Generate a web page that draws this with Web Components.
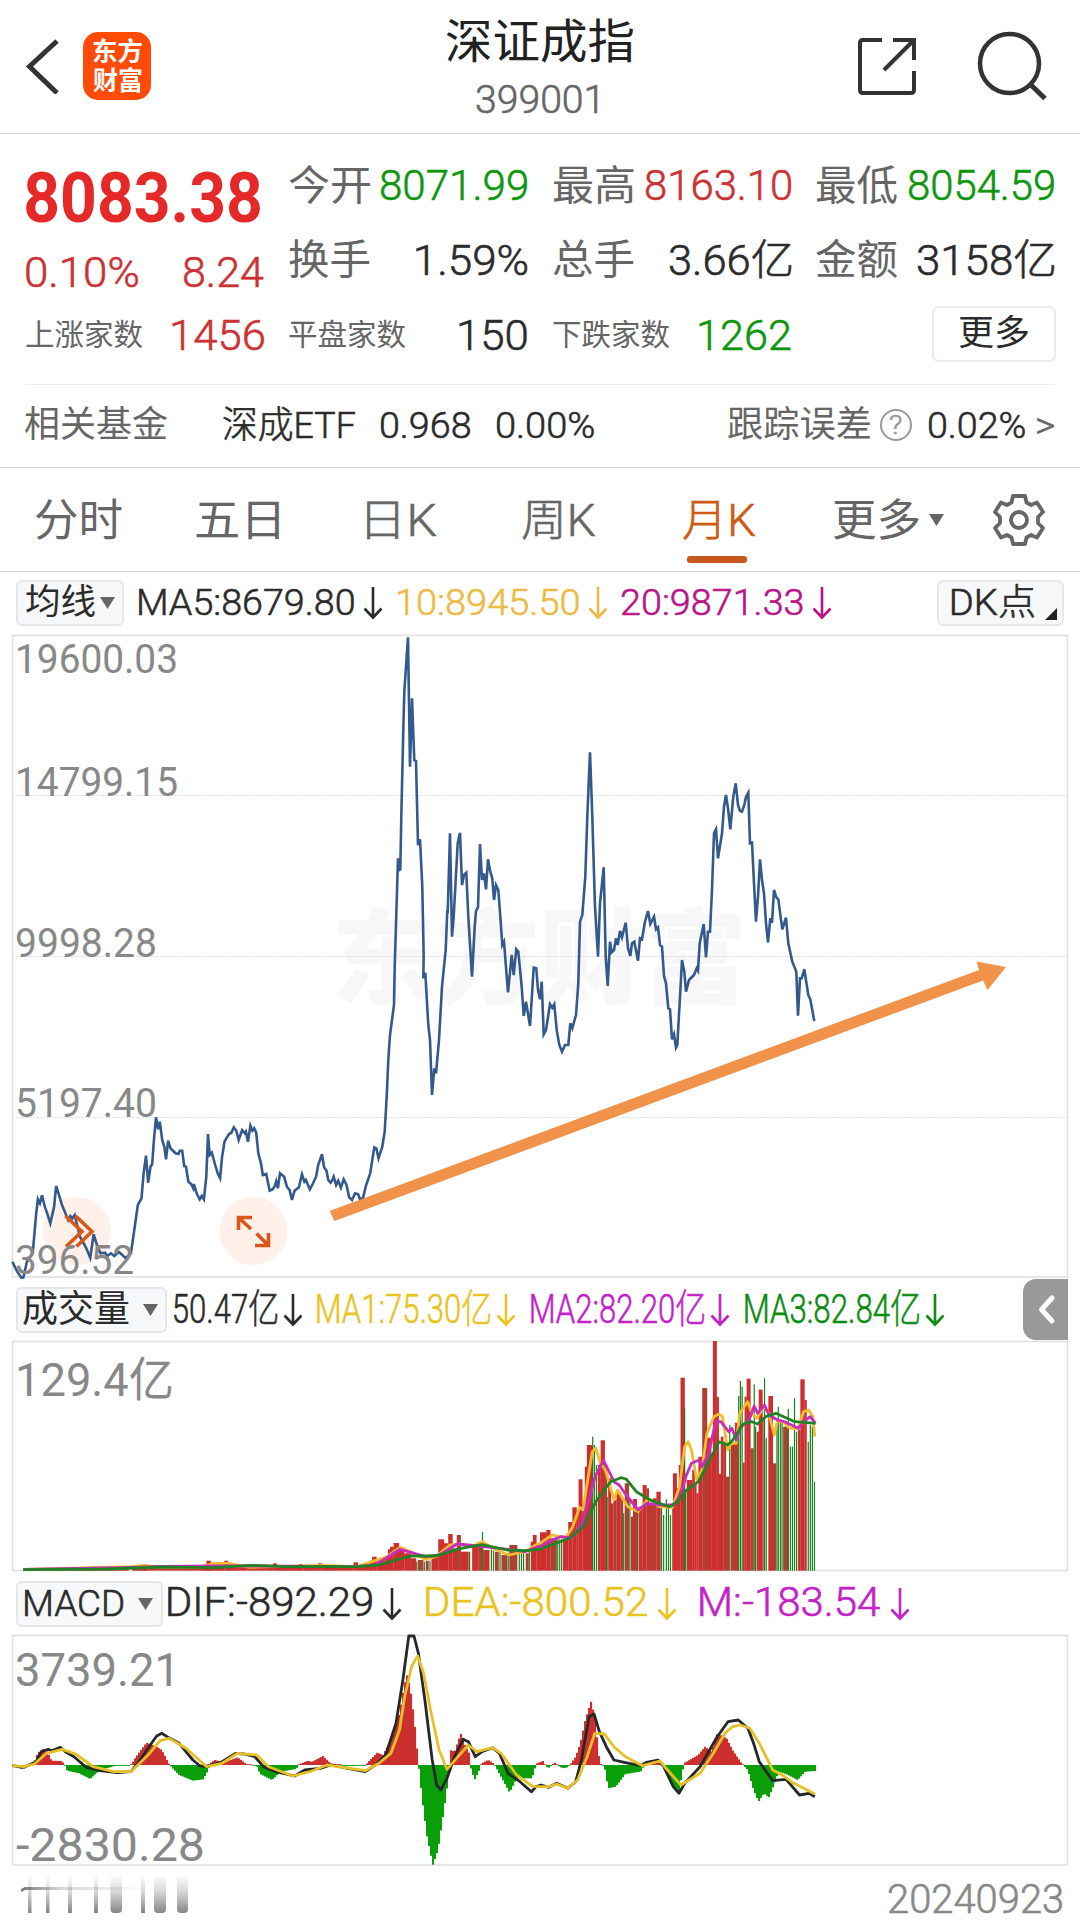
<!DOCTYPE html>
<html lang="zh-CN">
<head>
<meta charset="utf-8">
<title>深证成指 399001</title>
<style>
html,body{margin:0;padding:0;background:#fff}
body{width:1080px;font-family:Roboto,"Noto Sans CJK SC",sans-serif;color:#2b2b2b}
</style>
</head>
<body>
<stock-page></stock-page>
<script>
const FONT = 'Roboto,"Noto Sans CJK SC",sans-serif';
const pen = document.createElement('canvas').getContext('2d');

/* Text whose ink is fitted to the width given in w */
class FitText extends HTMLElement {
  connectedCallback() {
    const text = this.textContent;
    const w = +this.getAttribute('w'), size = +this.getAttribute('s') || 38;
    const slim = !this.hasAttribute('b') && /[\x20-\x7e]/.test(text);
    const weight = this.getAttribute('b') || (slim ? 300 : 400), ml = +this.getAttribute('ml') || 0;
    const dy = +this.getAttribute('dy') || 0, c = this.getAttribute('c');
    pen.font = `${weight} ${size}px ${FONT}`;
    const m = pen.measureText(text);
    const k = w / (m.actualBoundingBoxLeft + m.actualBoundingBoxRight);
    this.attachShadow({mode: 'open'}).innerHTML = `<style>
      :host{display:block;flex:none;width:${w}px;height:${size}px;line-height:${size}px;font-size:${size}px;
        font-weight:${weight};margin-left:${ml}px;white-space:nowrap;${c ? `color:${c};` : ''}${slim ? '-webkit-text-stroke:.6px;' : ''}}
      span{display:inline-block;transform-origin:0 0;transform:translate(${m.actualBoundingBoxLeft * k}px,${dy}px) scaleX(${k})}
      </style><span><slot></slot></span>`;
  }
}
customElements.define('fit-text', FitText);

const define = (name, html) => customElements.define(name, class extends HTMLElement {
  connectedCallback() {
    if (!this.shadowRoot) this.attachShadow({mode: 'open'}).innerHTML = html;
  }
});

define('down-arrow', `<style>:host{display:block;flex:none;width:20px;height:34px}svg{display:block}</style>
<svg width="20" height="34" viewBox="0 0 20 34" fill="none" stroke="currentColor" stroke-width="2.6"><path d="M10 1V31M1.5 22.5L10 31.5L18.5 22.5"/></svg>`);

define('drop-mark', `<style>:host{display:block;flex:none;width:15px;height:12px;color:#666}svg{display:block}</style>
<svg width="15" height="12" viewBox="0 0 15 12"><path d="M0 0H15L7.5 12Z" fill="currentColor"/></svg>`);

define('chip-button', `<style>:host{display:flex;box-sizing:border-box;flex:none;align-items:center;height:46px;
border:2px solid #e4e8ea;border-radius:6px;background:#f6f8fa;color:#2b2b2b}</style><slot></slot>`);

define('app-header', `<style>
:host{display:flex;box-sizing:border-box;height:134px;border-bottom:1px solid #d8d8d8;justify-content:space-between}
.l,.r{display:flex;width:300px}.c{display:flex;flex-direction:column;align-items:center;padding-top:17px}
.logo{width:68px;height:68px;border-radius:15px;background:#ff4b05;margin:32px 0 0 24px;color:#fff;display:flex;
flex-direction:column;align-items:center;padding-top:5px;box-sizing:border-box;gap:3px}
.l>svg{margin:38px 0 0 25px}.r{justify-content:flex-end}svg{flex:none;display:block}
</style>
<div class="l"><svg width="34" height="56" viewBox="25 38 34 56" fill="none" stroke="#333" stroke-width="5"><path d="M57 41L29.5 66.5L57 93"/></svg>
<div class="logo"><fit-text w="49" s="26" b="700" dy="2">东方</fit-text><fit-text w="49" s="26" b="700" dy="2">财富</fit-text></div></div>
<div class="c"><fit-text ml="-2" w="187" s="47" c="#222" dy="1">深证成指</fit-text><fit-text ml="-7" w="121" s="38" c="#666" dy="17">399001</fit-text></div>
<div class="r"><svg width="240" height="133" viewBox="840 0 240 133" fill="none" stroke="#333" stroke-width="4">
<path d="M882 40H863Q860 40 860 43V90Q860 93 863 93H911Q914 93 914 90V71M893 40H914V60M913 41L884 70"/>
<circle cx="1009.500" cy="63.5" r="29.5" stroke-width="4.500"/><path d="M1030 84L1045 98.500" stroke-width="5"/></svg></div>`);

const R = '#cb3235', G = '#0e970e', L = '#666';
define('quote-stats', `<style>
:host{display:flex;box-sizing:border-box;height:250px;padding:15px 0 0 25.5px;gap:25.500px}
.col{width:238px;display:flex;flex-direction:column}
.row{display:flex;justify-content:space-between;align-items:center;height:74.5px}
.big{height:97px}
.second{height:52px}
.more{display:flex;align-items:center;justify-content:center;width:124px;height:56px;box-sizing:border-box;border:2px solid #ebebeb;
border-radius:7px;margin:0 -2px 0 auto;position:relative;top:-1px}
</style>
<div class="col"><div class="row big"><fit-text w="234" s="70" b="700" c="#e52929">8083.38</fit-text></div>
<div class="row second"><fit-text w="112" s="43" c="${R}">0.10%</fit-text><fit-text w="80" s="43" c="${R}">8.24</fit-text></div>
<div class="row"><fit-text w="117" s="30" c="${L}">上涨家数</fit-text><fit-text w="92" s="43" c="${R}">1456</fit-text></div></div>
<div class="col"><div class="row"><fit-text w="81" s="41" c="${L}">今开</fit-text><fit-text w="146" s="42" c="${G}">8071.99</fit-text></div>
<div class="row"><fit-text w="81" s="41" c="${L}">换手</fit-text><fit-text w="111" s="42">1.59%</fit-text></div>
<div class="row"><fit-text w="117" s="30" c="${L}">平盘家数</fit-text><fit-text w="68" s="43">150</fit-text></div></div>
<div class="col"><div class="row"><fit-text w="81" s="41" c="${L}">最高</fit-text><fit-text w="145" s="42" c="${R}">8163.10</fit-text></div>
<div class="row"><fit-text w="81" s="41" c="${L}">总手</fit-text><fit-text w="121" s="42">3.66亿</fit-text></div>
<div class="row"><fit-text w="117" s="30" c="${L}">下跌家数</fit-text><fit-text w="92" s="43" c="${G}">1262</fit-text></div></div>
<div class="col"><div class="row"><fit-text w="81" s="41" c="${L}">最低</fit-text><fit-text w="145" s="42" c="${G}">8054.59</fit-text></div>
<div class="row"><fit-text w="81" s="41" c="${L}">金额</fit-text><fit-text w="136" s="42">3158亿</fit-text></div>
<div class="row"><div class="more"><fit-text w="70" s="35" dy="-1">更多</fit-text></div></div></div>`);

define('fund-row', `<style>
:host{display:flex;align-items:center;box-sizing:border-box;height:84px;border-bottom:1px solid #d8d8d8;position:relative;padding:0 0 1px 25px}
:host::before{content:"";position:absolute;left:25px;right:25px;top:0;height:1px;background:#ececec}
.q{display:flex;align-items:center;justify-content:center;width:32px;height:32px;box-sizing:border-box;border:2px solid #999;border-radius:50%;margin-left:10px}
</style>
<fit-text w="142" s="36" c="${L}">相关基金</fit-text><fit-text ml="56" w="132" s="37">深成ETF</fit-text>
<fit-text ml="26" w="89" s="37">0.968</fit-text><fit-text ml="27" w="97" s="37">0.00%</fit-text>
<fit-text ml="134" w="142" s="36" c="${L}">跟踪误差</fit-text><div class="q"><fit-text w="12" s="25" c="#999">?</fit-text></div>
<fit-text ml="17" w="96" s="37">0.02%</fit-text><fit-text ml="12" w="17" s="37" c="${L}">&gt;</fit-text>`);

define('period-tabs', `<style>
:host{display:flex;align-items:center;box-sizing:border-box;height:104px;border-bottom:1px solid #d8d8d8;color:${L};padding-left:35px}
.on{position:relative;margin-left:88px;color:#cf5a12}
.on::after{content:"";position:absolute;left:4px;top:58px;width:60px;height:7px;border-radius:3px;background:#c8581a}
svg{margin-left:49px;flex:none}drop-mark{margin-left:10px}
</style>
<fit-text w="87" s="44" dy="1">分时</fit-text><fit-text ml="74" w="83" s="44" dy="1">五日</fit-text><fit-text ml="88" w="69" s="44" dy="1">日K</fit-text>
<fit-text ml="86" w="73" s="44" dy="1">周K</fit-text><div class="on"><fit-text w="72" s="44" dy="1">月K</fit-text></div><fit-text ml="79" w="85" s="44" dy="1">更多</fit-text><drop-mark></drop-mark>
<svg width="52" height="54" viewBox="-26 -27 52 54" fill="none" stroke="#666" stroke-width="3.800" stroke-linejoin="round"><circle r="8"/>
<path d="M-6 -24H6L7.5 -17.5L12 -15L18 -17.5L24 -8L19 -3V3L24 8L18 17.5L12 15L7.5 17.5L6 24H-6L-7.5 17.5L-12 15L-18 17.5L-24 8L-19 3V-3L-24 -8L-18 -17.5L-12 -15L-7.5 -17.5Z"/></svg>`);

const rowStyle = `:host{display:flex;align-items:center;box-sizing:border-box;padding-left:16px}
.y{color:#e9c31f;display:contents}.m{color:#c322c8;display:contents}.g{color:#0d8c12;display:contents}.k{display:contents}`;
define('ma-row', `<style>${rowStyle}
:host{height:63px;padding-bottom:2px}.o{display:contents;color:#ecbb45}.p{display:contents;color:#b91587}
.dk{margin-left:105px;width:127px}.tri{align-self:flex-end;margin:0 0 4px 11px;border-left:12px solid transparent;border-bottom:12px solid #222}
down-arrow{margin-left:9px}</style>
<chip-button style="width:108px"><fit-text ml="8" w="69" s="35">均线</fit-text><drop-mark style="margin-left:5px"></drop-mark></chip-button>
<div class="k"><fit-text ml="15" w="215" s="37">MA5:8679.80</fit-text><down-arrow></down-arrow></div>
<div class="o"><fit-text ml="15" w="181" s="37">10:8945.50</fit-text><down-arrow></down-arrow></div>
<div class="p"><fit-text ml="13" w="182" s="37">20:9871.33</fit-text><down-arrow></down-arrow></div>
<chip-button class="dk"><fit-text ml="13" w="82" s="36">DK点</fit-text><i class="tri"></i></chip-button>`);

define('volume-row', `<style>${rowStyle}
:host{height:63px;position:relative}down-arrow{margin-left:6px}
.fold{position:absolute;left:1023px;top:1px;width:45px;height:61px;background:#999;border-radius:13px 0 0 13px}</style>
<chip-button style="width:151px"><fit-text ml="5" w="106" s="37">成交量</fit-text><drop-mark style="margin-left:14px"></drop-mark></chip-button>
<div class="k"><fit-text ml="7" w="103" s="40">50.47亿</fit-text><down-arrow></down-arrow></div>
<div class="y"><fit-text ml="14" w="173" s="40">MA1:75.30亿</fit-text><down-arrow></down-arrow></div>
<div class="m"><fit-text ml="15" w="173" s="40">MA2:82.20亿</fit-text><down-arrow></down-arrow></div>
<div class="g"><fit-text ml="15" w="174" s="40">MA3:82.84亿</fit-text><down-arrow></down-arrow></div>
<svg class="fold" viewBox="0 0 45 61" fill="none" stroke="#fff" stroke-width="5" stroke-linecap="round" stroke-linejoin="round"><path d="M29 19L18.500 30.500L29 42"/></svg>`);

define('macd-row', `<style>${rowStyle}
:host{height:63px;}down-arrow{margin-left:10px}</style>
<chip-button style="width:147px"><fit-text ml="7" w="98" s="37">MACD</fit-text><drop-mark style="margin-left:15px"></drop-mark></chip-button>
<div class="k"><fit-text ml="5" w="204" s="40" dy="-1">DIF:-892.29</fit-text><down-arrow></down-arrow></div>
<div class="y"><fit-text ml="24" w="221" s="40" dy="-1">DEA:-800.52</fit-text><down-arrow></down-arrow></div>
<div class="m"><fit-text ml="23" w="180" s="40" dy="-1">M:-183.54</fit-text><down-arrow></down-arrow></div>`);

/* Series are stored as sections: origin x, origin y, horizontal step, then x/y pairs (thirds of a pixel vertically) */
const decode = sections => sections.flatMap(([ox, oy, kx, s]) =>
  s.trim().split(/\s+/).map(p => { const [x, y] = p.split(',').map(Number); return [ox + x * kx, oy + y / 3]; }));
const line = sections => decode(sections).map(p => p.map(v => v.toFixed(1)).join()).join(' ');
const A = 540 / 1568, B = 560 / 1568, C = 600 / 1568, T = 1 / 3;

const PRICE = [
[0,960,A,`36,905 50,935 62,953 68,952 78,905 95,880 105,760 110,718 116,730 122,706 130,740 137,760 146,790 157,740 163,678 170,700 180,735 192,765 198,780 204,768 210,775 217,765 225,800 232,830 246,855 255,875 262,893 272,823 283,860 292,880 305,878 312,888 322,880 332,888 345,876 355,885 365,895 380,880 390,810 400,735 411,715 417,640 424,587 430,668 437,620 442,612 447,540 453,472 459,508 464,485 471,540 477,560 482,598 488,542 495,565 503,573 510,580 518,582 522,572 529,572 535,618 540,620 547,665 555,672 561,685 563,672 571,700 580,718 586,708 592,718 599,650 604,522 609,585 615,578 625,615 632,640 639,655 645,590 652,545 660,530 665,522 672,518 679,502 686,512 693,540 703,510 711,520 714,515 720,545 727,497 733,512 738,505 744,518 750,580 758,610 763,645 773,642 783,692 792,688 798,678 802,664 807,685 813,640 825,650 833,680 841,690 848,720 855,692 868,682 877,643 884,665 888,660 900,688 908,672 918,650 924,615 935,583 941,622 948,632 953,660 960,668 964,662 969,650 976,675 982,662 990,683 998,658 1006,675 1014,712 1022,720 1031,700 1040,703 1045,718 1054,715 1062,680 1075,640 1087,562 1093,565 1099,595 1110,560 1117,515`],
[360,900,T,`80,590 85,480 90,405 102,315 104,200`],
[360,630,T,`105,980 114,685 118,720 121,718 124,560 130,300 133,185 144,22 150,410 156,205 163,390 168,393 174,645 180,628 187,770 191,980`],
[360,900,T,`190,235 196,218 205,375 210,420 216,585 223,505 228,520 237,420 246,260 257,150 262,30`],
[360,630,T,`263,850 270,610 276,920 281,860 293,640 300,608 306,765 312,735 319,728 325,860 336,1040 344,890 348,843 354,832 360,642 366,750 372,730 378,778 384,688 391,725 397,745 402,810 408,765 415,780 421,860 427,945 432,935`],
[360,900,T,`437,190 444,277 455,165 461,225 469,148 475,155 485,260 491,348 498,305 510,378 521,203 529,205 534,270 540,298 545,245 551,403 558,390 570,313 577,323 583,313 590,390 598,435 606,455 615,435 625,435 631,370 637,385 648,345 655,250 660,65 667,45`],
[360,630,T,`676,740 682,560 690,367 697,560 705,830 714,980 720,820 731,712 737,980`],
[360,900,T,`743,258 750,125 755,157 762,150 768,115 773,135 780,93 786,112 797,68 804,145 811,168 816,130 823,125 834,182 840,115 846,118 855,65 864,33 871,72 882,50 888,88 894,82 900,135 906,140 912,228 918,250 925,325 930,328 936,418 942,403 948,443 952,435 960,290 966,180 973,215 978,275 987,240 1002,225 1010,205 1014,212 1019,130 1031,72 1038,172`],
[560,740,T,`444,575 450,575 456,450 462,280 468,268 474,355 486,280 492,200 498,165 504,205 511,268 520,170 527,130 534,195 540,213 546,215 553,195 558,170 565,158 570,310 576,308 582,430 588,545 594,470 600,358 606,420 612,460 618,550 624,607 631,535 636,548 642,450 649,472 655,478 667,568 678,533 685,610 697,665 709,695 714,827 720,715 725,715 733,688 745,765 751,778 763,843`]];

const axis = (x, y, w, s, t) => `<text x="${x}" y="${y}" textLength="${w}" lengthAdjust="spacingAndGlyphs" font-size="${s}" fill="#888">${t}</text>`;
const chart = (top, h, body) => `<style>:host{display:block;height:${h}px}svg{display:block;overflow:visible;font-family:${FONT}}</style>
<svg width="1080" height="${h}" viewBox="0 ${top} 1080 ${h}">${body}</svg>`;
const frame = (y1, y2) => `<rect x="12.500" y="${y1}" width="1055" height="${y2 - y1}" fill="none" stroke="#e0e0e0" stroke-width="1.600"/>`;

define('price-chart', chart(635, 643, `
<text x="332" y="996" textLength="415" lengthAdjust="spacingAndGlyphs" font-size="103" font-weight="900" fill="#f7f7f7">东方财富</text>
${frame(635.5, 1277)}
<path d="M13 795.500H1067M13 956.500H1067M13 1117.500H1067" stroke="#d9d9d9" stroke-width="1.200" stroke-dasharray="1.500 1.500"/>
<circle cx="76.500" cy="1231" r="34" fill="#fff0e9"/><circle cx="253.500" cy="1231" r="34" fill="#fff0e9"/>
<polyline points="${line(PRICE)}" fill="none" stroke="#34598c" stroke-width="2.600"/>
<g fill="none" stroke="#da571a" stroke-width="3.600"><path d="M65.500 1216L82 1231.500L66 1246.500M75.500 1216L92 1231.500L76.500 1246.500"/>
<path d="M252 1217.500H238.500V1230M239 1218L251 1229M255 1245.500H268.500V1233M268 1245L256.500 1233.500"/></g>
${axis(15, 673, 163, 40, '19600.03')}${axis(15, 796, 163, 40, '14799.15')}${axis(15, 957, 142, 40, '9998.28')}${axis(15, 1117, 142, 40, '5197.40')}${axis(15, 1273.5, 119, 40, '396.52')}
<path d="M329.500 1211L979 970L976.500 961.500L1006 967L987.500 990L983 980.500L334.500 1221Z" fill="#f0924a"/>`));

/* Volume bars: x0,x1,top (d marks a darker bar); single bars are x,top */
const BLOCKS = [[B,0,`65,360,896 255,268,890 370,410,887 400,412,882 412,560,892 560,590,890 578,590,872 590,628,884 628,638,872 638,665,887 665,745,892 745,765,888 765,775,880 775,840,891 837,847,882 847,890,890 890,902,880 902,935,888 935,990,892 990,1002,877 1002,1040,886 1035,1042,872 1042,1054,860 1054,1078,872 1078,1086,860 1086,1092,838 1092,1102,830 1102,1117,819 1117,1132,832 1132,1150,850 1150,1165,865 1170,1185,870,d 1192,1200,872,d 1208,1227,860 1227,1243,808 1243,1255,820 1255,1267,792 1267,1279,835 1279,1290,795,d 1290,1312,845 1322,1340,825 1340,1353,815,d 1353,1370,840 1386,1396,845,d 1404,1420,855,d 1426,1448,825,d 1472,1480,850,d 1486,1492,815 1492,1502,795 1502,1514,825`],
[A,540,`0,18,787 18,30,780 30,48,805,d 66,82,805 82,94,756 94,106,712 106,112,720 112,123,628 123,130,700 130,136,590 136,153,525 168,176,585 176,188,511 188,194,590,d 198,206,625 206,213,700 213,222,690,d 222,234,665 234,241,680,d 246,258,640,d 264,270,740,d 270,281,687 286,298,710 298,309,645 309,316,655,d 316,328,705 328,338,685,d 338,350,665 384,386,705 386,397,610 397,403,655 403,408,585 408,420,323 426,442,630 442,449,600 449,454,640 454,460,670 460,471,560 471,485,354,d 485,497,503 497,502,560 502,513,213 513,519,381 519,525,612 525,532,500 532,540,515,d 540,549,620 554,566,520,d 566,576,458 589,594,578 594,600,380 600,611,326 611,620,535,d 629,635,485 635,646,359 646,649,450,d 663,676,378 676,685,580,d 706,721,470,d 749,756,480 756,768,328 768,774,390`]];
const THIN = [[B,0,`1167,875 1188,875 1204,872 1315,845 1351,786 1376,838 1382,842 1400,840 1423,848 1454,850 1460,850 1466,848 1482,845`],
[A,540,`50,808 56,808 62,808 153,500 158,525 164,585 195,680 243,730 261,690 283,720 353,715 359,735 367,688 373,715 379,735 420,415 423,660 551,465 577,378 582,333 587,350 622,343 626,470 652,325 657,505 688,450 692,410 698,455 703,460 721,417 727,530 733,530 739,385 745,485 779,515 785,465 791,470 797,635`]];
const bars = BLOCKS.map(([k, ox, s]) => s.split(' ').map(p => { const [a, b, t, d] = p.split(',');
  return `<rect x="${(ox + a * k).toFixed(2)}" y="${(1270 + t / 3).toFixed(1)}" width="${((b - a) * k + .2).toFixed(2)}" height="${((902 - t) / 3).toFixed(1)}" fill="${d ? '#ad4030' : '#cb302f'}"/>`; }).join('')).join('')
 + THIN.map(([k, ox, s]) => s.split(' ').map(p => { const [a, t] = p.split(',');
  return `<rect x="${(ox + a * k - .6).toFixed(2)}" y="${(1270 + t / 3).toFixed(1)}" width="1.2" height="${((902 - t) / 3).toFixed(1)}" fill="#1a811c"/>`; }).join('')).join('');
const V1 = [[0,1270,B,`65,898 370,890 405,886 450,892 560,892 600,880 640,880 700,892 900,886 1000,890 1050,872 1080,862 1120,832 1150,845 1190,868 1220,860 1260,825 1290,822 1320,830 1350,815 1390,840 1425,855 1470,845 1505,822`],
[540,1270,A,`0,820 35,795 75,803 95,770 115,712 125,720 140,620 152,545 162,535 175,580 190,600 215,690 225,660 255,710 285,725 315,685 345,710 385,712 405,650 420,530 430,515 440,540 455,630 470,600 485,490 505,440 520,432 530,440 545,540 555,520 570,520 580,430 603,395 615,430 630,445 650,410 665,430 680,495 690,450 710,460 725,475 750,475 765,425 780,420 792,440 798,500`]];
const V2 = [[0,1270,B,`65,898 370,892 450,889 600,888 700,888 900,889 1000,890 1050,884 1085,862 1120,838 1160,850 1190,860 1230,855 1280,822 1340,828 1400,835 1470,845 1505,830`],
[540,1270,A,`0,830 30,812 60,800 90,803 120,765 145,680 160,620 184,570 215,635 230,645 250,675 285,720 310,700 350,705 390,705 410,670 425,615 440,580 462,570 470,590 490,550 510,455 525,455 548,485 557,475 570,510 582,470 605,455 622,408 632,430 652,405 665,435 690,450 710,455 730,465 750,475 765,455 785,440 800,460`]];
const V3 = [[0,1270,B,`65,899 300,897 450,891 600,893 700,886 800,890 1000,890 1060,885 1150,858 1220,858 1290,835 1350,824 1420,840 1480,842 1505,838`],
[540,1270,A,`0,838 50,818 85,805 130,765 150,720 165,690 205,635 235,623 250,627 280,665 320,690 375,710 400,695 420,665 460,635 490,575 520,515 545,525 560,510 590,462 615,455 632,462 655,440 685,430 740,455 800,460`]];
const curve = (s, c, w = 2.8) => `<polyline points="${line(s)}" fill="none" stroke="${c}" stroke-width="${w}" stroke-linejoin="round"/>`;

define('volume-chart', chart(1341, 231, `${frame(1341.5, 1570.5)}${bars}
${curve(V1, '#f4bb2c')}${curve(V2, '#c92dbc')}${curve(V3, '#218424')}${axis(15, 1396, 159, 47, '129.4亿')}`));

const HIST = decode([[0,1570,A,`36,585 60,597 85,588 100,575 110,548 125,537 138,545 150,572 180,573 188,585 195,602 230,610 262,627 290,600 345,585 380,585 395,560 425,518 455,530 470,540 490,580 497,590 520,615 560,632 590,628 605,600 612,578 625,570 650,578 690,562 715,582 745,587 755,612 790,630 815,605 860,597 870,582 895,572 905,576 938,558 960,580 1010,588 1060,587 1070,575 1095,548 1112,555 1135,510 1160,430 1175,340 1183,312 1195,380 1205,470 1213,560 1216,590 1225,680 1240,800 1257,885 1272,840 1288,730 1300,640 1305,590 1308,540 1320,545 1338,490 1350,525 1363,550 1366,590 1378,630 1392,600 1398,580 1418,570 1433,580 1440,592 1460,630 1480,668 1500,625 1545,625 1555,590`],
[480,1570,C,`148,580 165,573 172,590 180,593 195,577 210,592 225,595 238,580 250,560 262,520 275,450 290,395 300,440 313,580 325,588 335,655 355,650 380,612 420,605 430,585 460,570 475,580 485,600 505,650 520,665 530,600 535,578 570,555 588,530 605,545 620,490 645,505 660,540 685,582 700,600 715,660 728,695 742,670 755,682 770,640 780,605 800,612 830,630 850,605 878,603`]]);
let hist = '', seg = 0;
for (let x = 13; x < 816; x += 2) {
  while (seg < HIST.length - 2 && HIST[seg + 1][0] < x) seg++;
  const [x1, y1] = HIST[seg], [x2, y2] = HIST[seg + 1];
  const y = y1 + (y2 - y1) * Math.min(1, Math.max(0, (x - x1) / (x2 - x1)));
  const h = Math.max(.8, Math.abs(y - 1765));
  hist += `<rect x="${x - 1}" y="${(y < 1765 ? 1765 - h : 1765).toFixed(1)}" width="2.1" height="${h.toFixed(1)}" fill="${y < 1765 ? '#cb302f' : '#0a9f08'}"/>`;
}
const DIF = [[0,1570,A,`36,587 70,592 105,575 120,545 140,538 150,542 175,532 190,545 215,560 250,592 290,602 340,608 380,605 400,580 440,520 455,498 470,490 485,500 520,520 560,570 580,587 595,590 640,578 685,550 710,552 740,560 765,590 800,605 855,618 885,600 930,595 960,585 1010,595 1060,605 1090,585 1120,555 1150,460 1170,330 1187,198 1202,198 1215,250 1235,400 1255,570 1268,645 1280,660 1298,625 1320,560 1345,508 1360,515 1380,560 1400,545 1430,533 1450,550 1475,610 1510,635 1543,665`],
[480,1570,C,`146,650 160,645 180,652 200,640 230,655 250,635 265,570 285,440 298,432 312,485 330,530 350,570 380,578 420,587 435,577 465,570 480,590 505,650 520,670 535,640 575,590 620,500 648,455 675,450 700,475 715,520 730,575 765,632 800,628 835,675 860,670 875,680`]];
const DEA = [[0,1570,A,`36,587 70,590 100,582 135,550 180,538 220,552 270,590 330,605 380,605 430,555 465,512 490,505 540,535 600,590 645,580 690,550 745,555 780,590 850,618 900,605 950,585 1060,602 1100,580 1135,550 1160,480 1175,380 1195,290 1213,258 1230,310 1250,420 1275,540 1298,598 1330,560 1360,525 1385,545 1430,533 1455,550 1500,615 1545,648`],
[480,1570,C,`145,650 180,650 200,642 230,655 255,630 280,560 300,490 325,492 350,530 380,560 425,587 470,573 490,600 525,645 575,610 610,550 640,490 660,470 680,465 705,475 730,520 765,600 790,615 820,640 875,672`]];

define('macd-chart', chart(1635, 231, `${frame(1635.5, 1865)}${hist}${curve(DIF, '#24282a', 2.8)}${curve(DEA, '#e5c027', 2.8)}
${axis(15, 1685.5, 165, 47, '3739.21')}${axis(16, 1860.5, 189, 47, '-2830.28')}`));

define('date-row', `<style>:host{display:flex;justify-content:space-between;height:63px;padding:0 18px 0 0}svg{display:block}fit-text{padding-top:14px}</style>
<svg width="210" height="63" viewBox="0 1866 210 63"><defs>
<linearGradient id="v" x1="0" y1="0" x2="0" y2="1"><stop offset="0" stop-color="#777" stop-opacity="0"/><stop offset=".45" stop-color="#777" stop-opacity=".3"/><stop offset="1" stop-color="#777" stop-opacity=".9"/></linearGradient>
<linearGradient id="h"><stop offset="0" stop-color="#777"/><stop offset=".3" stop-color="#777" stop-opacity=".3"/><stop offset="1" stop-color="#777" stop-opacity="0"/></linearGradient></defs>
<g fill="url(#v)"><rect x="28" y="1875" width="3.500" height="38"/><rect x="46" y="1875" width="3.500" height="38"/><rect x="68" y="1875" width="4" height="38"/><rect x="94" y="1875" width="4" height="38"/><rect x="110.500" y="1875" width="11.500" height="38" rx="4"/><rect x="141" y="1875" width="4" height="38"/><rect x="154" y="1875" width="12" height="38" rx="4"/><rect x="177" y="1875" width="11" height="38" rx="4"/></g>
<path d="M21 1892L21 1889L25 1887H150V1890H25Z" fill="url(#h)"/></svg>
<fit-text w="173" s="40" c="#888">20240923</fit-text>`);

define('stock-page', `<style>:host{display:block;width:1080px;height:1929px;overflow:hidden;background:#fff}</style>
<app-header></app-header><quote-stats></quote-stats><fund-row></fund-row><period-tabs></period-tabs><ma-row></ma-row>
<price-chart></price-chart><volume-row></volume-row><volume-chart></volume-chart><macd-row></macd-row><macd-chart></macd-chart><date-row></date-row>`);
</script>
</body>
</html>
